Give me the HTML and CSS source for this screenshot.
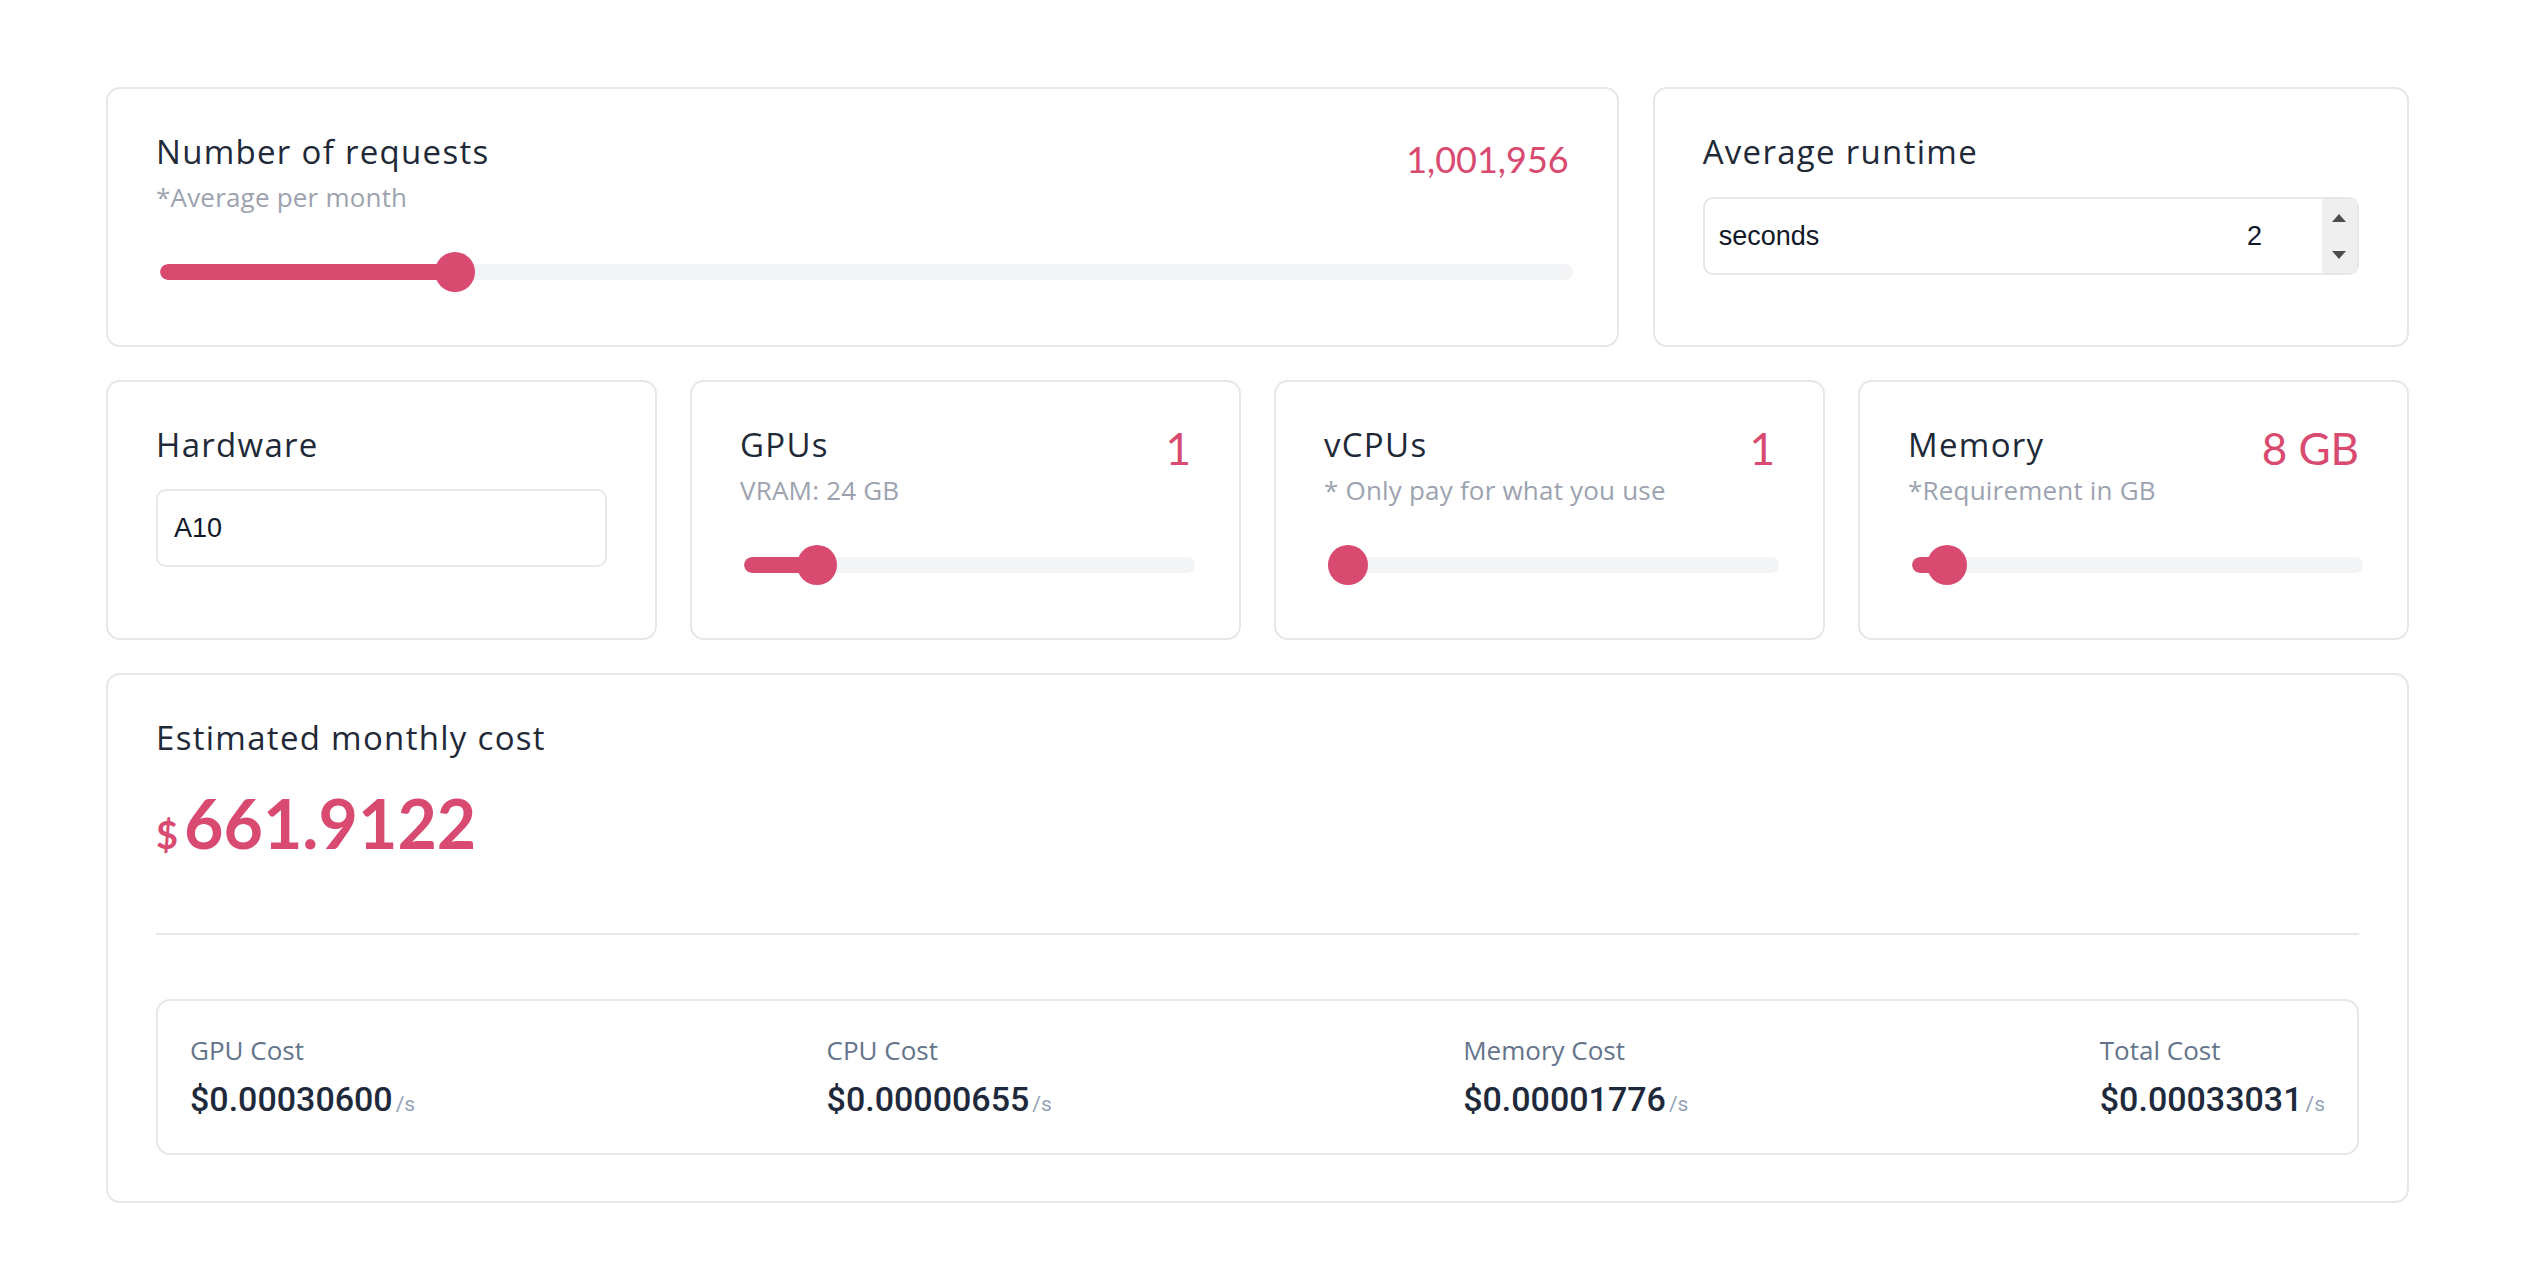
FILE: index.html
```html
<!DOCTYPE html>
<html lang="en">
<head>
<meta charset="utf-8">
<title>Cost calculator</title>
<link rel="stylesheet" href="styles.css">
</head>
<body>
<main class="page">
  <div class="row row-top">
    <section class="card">
      <div class="head">
        <div class="head-text">
          <h2 class="title">Number of requests</h2>
          <p class="sub">*Average per month</p>
        </div>
        <div class="value value-md">1,001,956</div>
      </div>
      <div class="slider" style="--p:0.2">
        <div class="track"><div class="fill"></div></div>
        <div class="thumb"></div>
      </div>
    </section>
    <section class="card">
      <h2 class="title">Average runtime</h2>
      <div class="field field-runtime">
        <span class="field-label">seconds</span>
        <span class="field-number">2</span>
        <span class="spinner">
          <span class="spin-btn"><svg width="16" height="10" viewBox="0 0 16 10"><polygon points="8,1 15,9 1,9" fill="#4d4d4d"/></svg></span>
          <span class="spin-btn"><svg width="16" height="10" viewBox="0 0 16 10"><polygon points="1,1 15,1 8,9" fill="#4d4d4d"/></svg></span>
        </span>
      </div>
    </section>
  </div>

  <div class="row row-mid">
    <section class="card">
      <h2 class="title">Hardware</h2>
      <div class="field field-select"><span class="field-text">A10</span></div>
    </section>
    <section class="card">
      <div class="head">
        <div class="head-text">
          <h2 class="title">GPUs</h2>
          <p class="sub">VRAM: 24 GB</p>
        </div>
        <div class="value value-lg">1</div>
      </div>
      <div class="slider" style="--p:0.128">
        <div class="track"><div class="fill"></div></div>
        <div class="thumb"></div>
      </div>
    </section>
    <section class="card">
      <div class="head">
        <div class="head-text">
          <h2 class="title">vCPUs</h2>
          <p class="sub">* Only pay for what you use</p>
        </div>
        <div class="value value-lg">1</div>
      </div>
      <div class="slider" style="--p:0">
        <div class="track"><div class="fill"></div></div>
        <div class="thumb"></div>
      </div>
    </section>
    <section class="card">
      <div class="head">
        <div class="head-text">
          <h2 class="title">Memory</h2>
          <p class="sub">*Requirement in GB</p>
        </div>
        <div class="value value-lg">8 GB</div>
      </div>
      <div class="slider" style="--p:0.036">
        <div class="track"><div class="fill"></div></div>
        <div class="thumb"></div>
      </div>
    </section>
  </div>

  <section class="card card-cost">
    <h2 class="title">Estimated monthly cost</h2>
    <div class="total">
      <span class="total-currency">$</span>
      <span class="total-amount">661.9122</span>
    </div>
    <hr class="divider">
    <div class="breakdown">
      <div class="cost-item">
        <div class="cost-label">GPU Cost</div>
        <div class="cost-value">$0.00030600<span class="unit">/s</span></div>
      </div>
      <div class="cost-item">
        <div class="cost-label">CPU Cost</div>
        <div class="cost-value">$0.00000655<span class="unit">/s</span></div>
      </div>
      <div class="cost-item">
        <div class="cost-label">Memory Cost</div>
        <div class="cost-value">$0.00001776<span class="unit">/s</span></div>
      </div>
      <div class="cost-item">
        <div class="cost-label">Total Cost</div>
        <div class="cost-value">$0.00033031<span class="unit">/s</span></div>
      </div>
    </div>
  </section>
</main>
</body>
</html>
```

FILE: styles.css
```css
html, body {
  margin: 0;
  padding: 0;
  background: #ffffff;
}

body {
  font-family: "Open Sans", "Lato", sans-serif;
  color: #1f2937;
}

.page {
  box-sizing: border-box;
  padding: 87px 113px 0 106px;
  display: flex;
  flex-direction: column;
  gap: 33px;
}

.row {
  display: grid;
  gap: 34px;
}

.row-top {
  grid-template-columns: 2fr 1fr;
}

.row-mid {
  grid-template-columns: repeat(4, 1fr);
  gap: 33px;
}

.card {
  box-sizing: border-box;
  border: 2px solid #e5e7eb;
  border-radius: 14px;
  padding: 43px 48px 53px;
  min-height: 260px;
  background: #fff;
  min-width: 0;
}

.head {
  display: flex;
  justify-content: space-between;
  align-items: flex-start;
}

.title {
  margin: 0;
  font-size: 33px;
  line-height: 40px;
  font-weight: 400;
  letter-spacing: 1.3px;
  color: #1f2937;
}

.sub {
  margin: 7px 0 0;
  font-size: 26px;
  line-height: 36px;
  letter-spacing: 0.2px;
  color: #9ca3af;
}

.value {
  font-family: "Lato", "Open Sans", sans-serif;
  color: #d94a70;
  font-weight: 400;
}

.value-md {
  font-size: 36px;
  line-height: 40px;
  margin-top: 7px;
}

.value-lg {
  font-size: 44px;
  line-height: 48px;
  margin-top: -1px;
}

/* slider */
.slider {
  position: relative;
  height: 40px;
  margin: 37px -4px 0 4px;
  display: flex;
  align-items: center;
}

.track {
  position: relative;
  width: 100%;
  height: 16px;
  border-radius: 8px;
  background: #f3f4f6;
  overflow: hidden;
}

.fill {
  height: 100%;
  width: calc((100% - 40px) * var(--p) + 20px);
  background: #d94a70;
  border-radius: 8px;
}

.thumb {
  position: absolute;
  top: 0;
  left: calc((100% - 40px) * var(--p));
  width: 40px;
  height: 40px;
  border-radius: 50%;
  background: #d94a70;
}

/* input fields */
.field {
  box-sizing: border-box;
  display: flex;
  align-items: center;
  height: 78px;
  border: 2px solid #e5e7eb;
  border-radius: 10px;
  margin-top: 24px;
  font-family: "Liberation Sans", Arial, sans-serif;
  font-size: 27px;
  color: #111827;
}

.field-runtime {
  margin-top: 25px;
  padding-left: 14px;
}

.field-select {
  padding-left: 16px;
}

.field-number {
  margin-left: auto;
  margin-right: 60px;
}

.spinner {
  align-self: stretch;
  width: 35px;
  display: flex;
  flex-direction: column;
  background: #efefef;
}

.spin-btn {
  flex: 1;
  display: flex;
  align-items: center;
  justify-content: center;
}

.spin-btn svg {
  display: block;
}

/* cost card */
.card-cost {
  padding-bottom: 46px;
}

.total {
  display: flex;
  align-items: baseline;
  margin-top: 25px;
  color: #d94a70;
  font-family: "Lato", "Open Sans", sans-serif;
}

.total-currency {
  font-size: 38px;
  font-weight: 700;
  margin-right: 6px;
}

.total-amount {
  font-size: 68px;
  line-height: 80px;
  font-weight: 700;
}

.divider {
  margin: 70px 0 0;
  border: 0;
  height: 2px;
  background: #e5e7eb;
}

.breakdown {
  box-sizing: border-box;
  margin-top: 64px;
  border: 2px solid #e5e7eb;
  border-radius: 14px;
  padding: 32px 32px 27px;
  display: flex;
  justify-content: space-between;
}

.cost-label {
  font-family: "Open Sans", sans-serif;
  font-size: 26px;
  line-height: 34px;
  color: #64748b;
}

.cost-value {
  font-family: "Roboto", "Open Sans", sans-serif;
  margin-top: 10px;
  font-size: 34px;
  line-height: 44px;
  font-weight: 500;
  color: #1e293b;
}

.unit {
  font-size: 21px;
  font-weight: 400;
  color: #94a3b8;
  margin-left: 3px;
}
```
